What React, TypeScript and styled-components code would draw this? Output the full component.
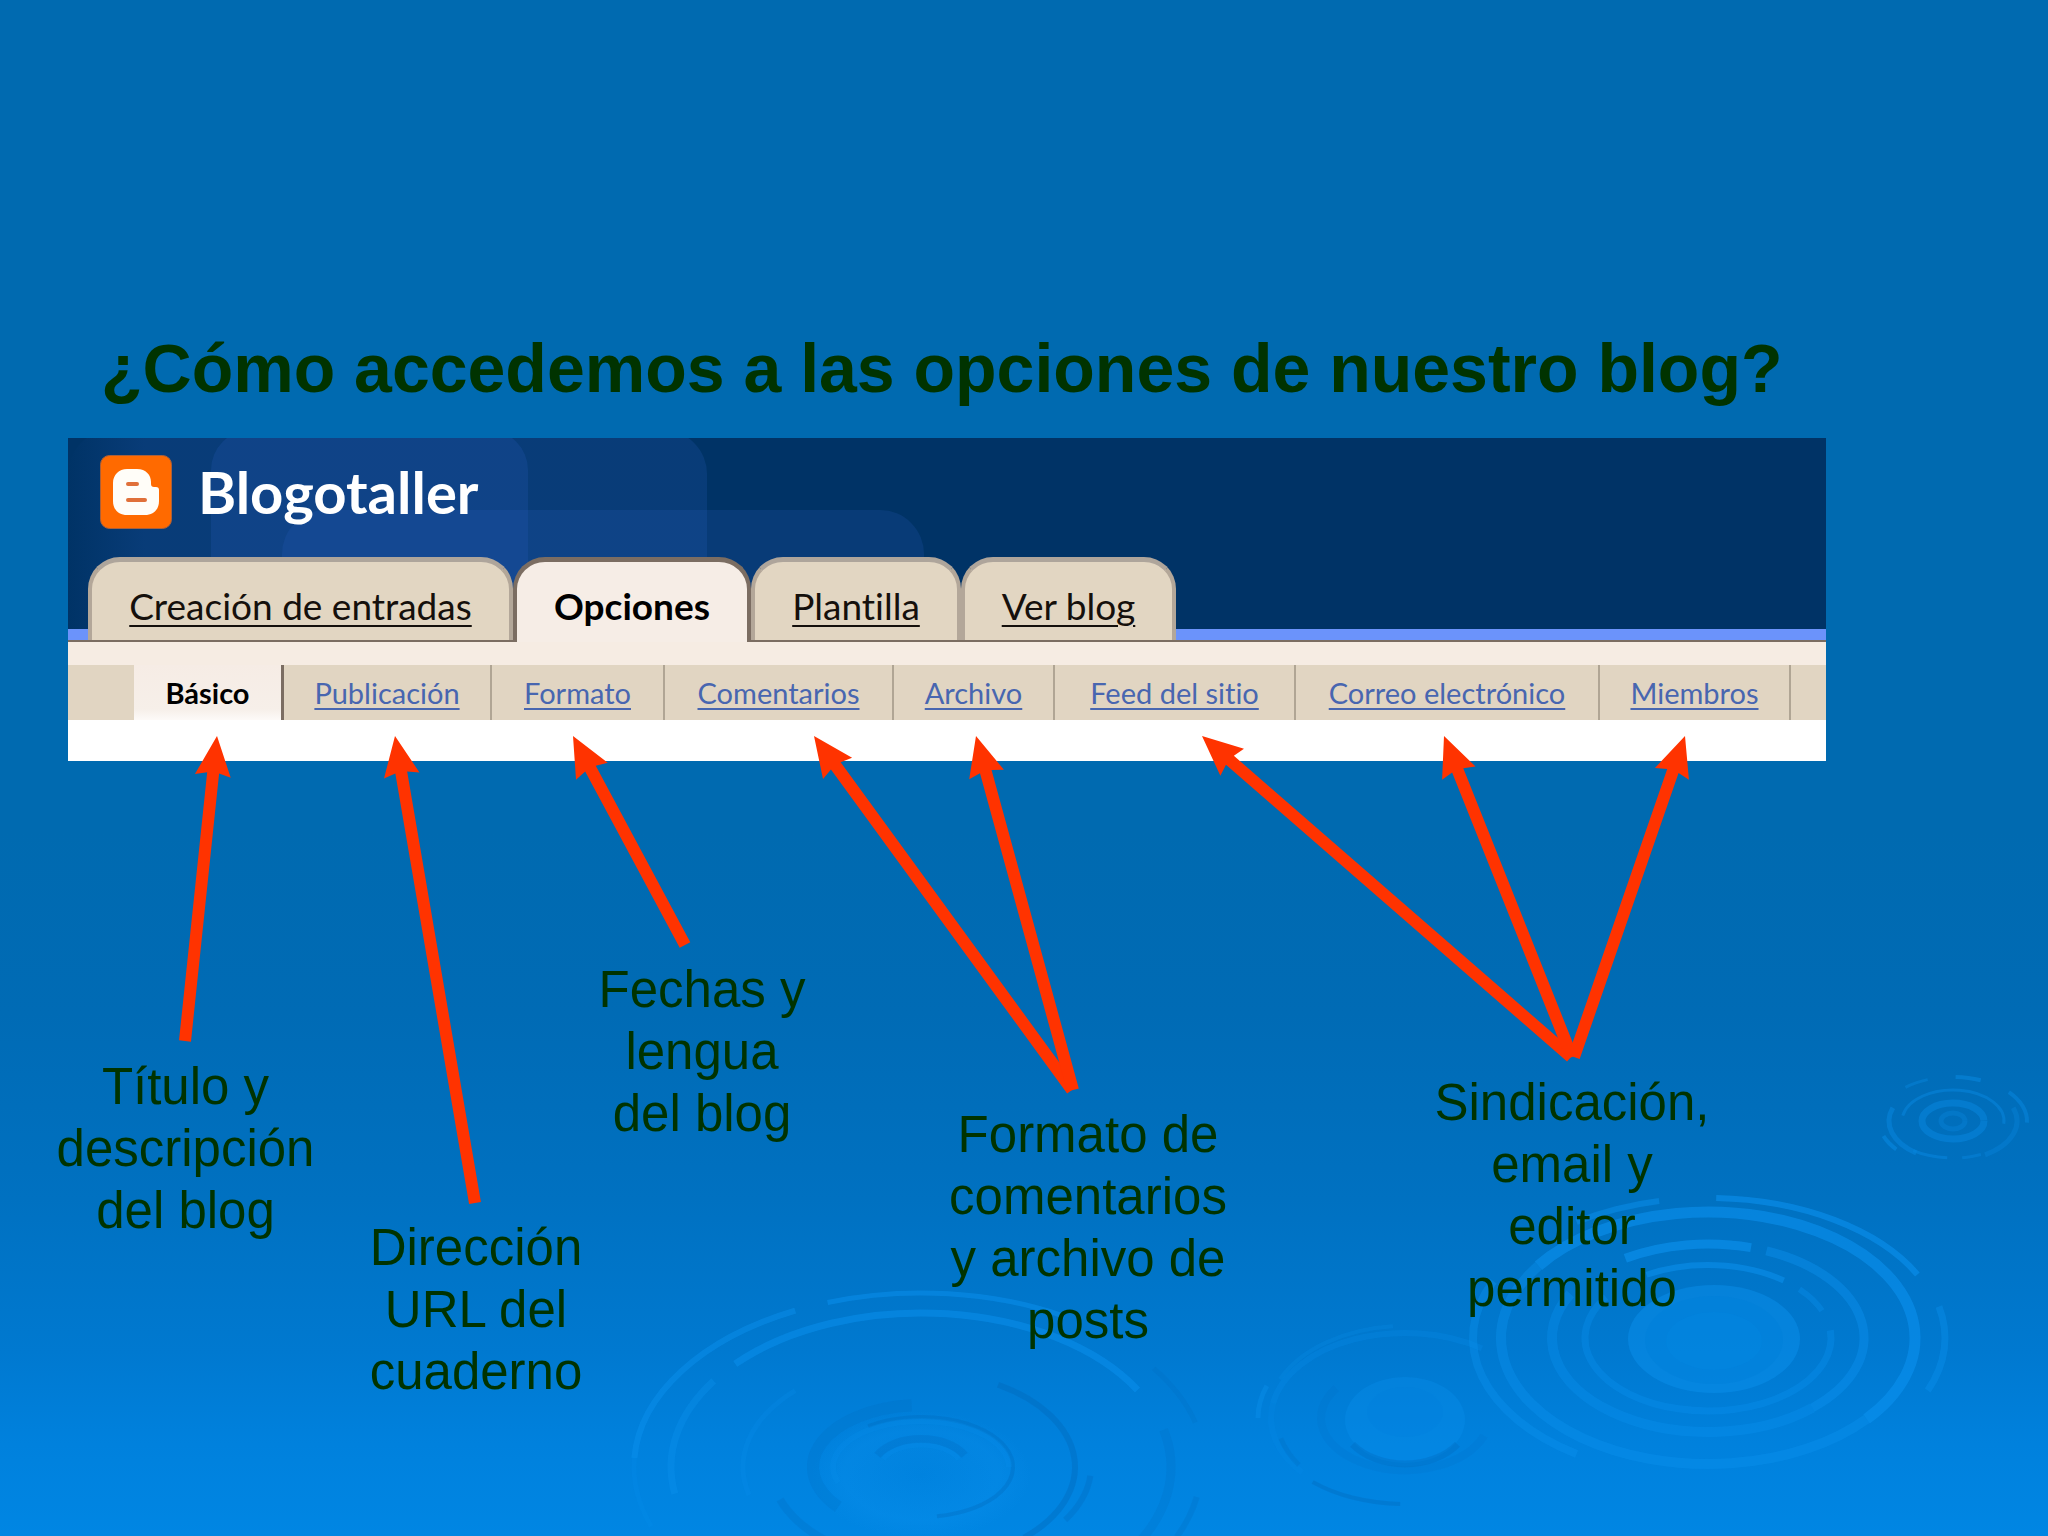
import React from "react";
import styled, { createGlobalStyle, css } from "styled-components";

const GlobalStyle = createGlobalStyle`
  *, *::before, *::after { box-sizing: border-box; }
  body { margin: 0; background: #0086e3; }
`;

const Slide = styled.main`
  position: relative;
  min-height: 100vh;
  padding-top: 320px;
  overflow: hidden;
  color: #003300;
  font-family: "Liberation Sans", Arial, sans-serif;
  background: linear-gradient(
    #006ab0 0%, #006ab0 54%, #006bb5 66%, #0071c1 78%, #0079d0 88%, #0081dd 94%, #0086e3 100%
  );
`;

const Water = styled.svg`
  position: absolute;
  inset: 0;
  width: 100%;
  height: 100%;
  fill: none;
`;

const Title = styled.h1`
  position: relative;
  margin: 0 0 22px;
  padding-left: 101px;
  font-size: 68px;
  line-height: 96px;
  font-weight: 700;
  white-space: nowrap;
`;

const Panel = styled.section`
  position: relative;
  margin: 0 222px 0 68px;
  padding-bottom: 41px;
  background: #ffffff;
  font-family: Lato, "Open Sans", sans-serif;
  font-variant-ligatures: none;
`;

const Header = styled.header`
  position: relative;
  display: flex;
  flex-direction: column;
  justify-content: space-between;
  height: 204px;
  overflow: hidden;
  background: #003366;
  border-bottom: 2px solid #7b6d62;
`;

const Backdrop = styled.svg`
  position: absolute;
  inset: 0;
  width: 100%;
  height: 100%;
`;

const Brand = styled.div`
  position: relative;
  display: flex;
  align-items: center;
  gap: 26px;
  padding: 17px 0 0 32px;
`;

const Logo = styled.svg`
  width: 72px;
  height: 74px;
`;

const BlogName = styled.h2`
  margin: 0;
  color: #ffffff;
  font-size: 58px;
  line-height: 74px;
  font-weight: 700;
`;

const Tabs = styled.nav`
  position: relative;
  display: flex;
  height: 83px;
  padding-left: 20px;
  background: linear-gradient(#6b93fb, #6b93fb) bottom / 100% 11px no-repeat;
`;

const Tab = styled.a<{ $width: number; $active?: boolean }>`
  flex: 0 0 ${(p) => p.$width}px;
  padding-top: 22px;
  border: 4px solid #b3a799;
  border-top: 5px solid #aea59b;
  border-bottom: 0;
  border-radius: 32px 32px 0 0;
  background: #e2d6c2;
  color: #15100c;
  font-size: 37px;
  line-height: 44px;
  text-align: center;
  text-decoration: underline;
  text-decoration-thickness: 2px;
  text-underline-offset: 5px;
  white-space: nowrap;
  ${(p) =>
    p.$active &&
    css`
      border-color: #7b6d62;
      background: #f6ede6;
      color: #000000;
      font-weight: 700;
      text-decoration: none;
    `}
`;

const ActiveBase = styled.div`
  position: absolute;
  z-index: 1;
  left: 449px;
  top: 202px;
  width: 230px;
  height: 2px;
  background: #f6ede6;
`;

const SubNav = styled.nav`
  display: flex;
  padding-left: 66px;
  border-top: 23px solid #f6ece3;
  background: #e1d5c2;
`;

const SubLink = styled.a<{ $width: number; $active?: boolean }>`
  flex: 0 0 ${(p) => p.$width}px;
  height: 55px;
  border-right: 2px solid #b0a594;
  color: #4866b0;
  font-size: 29px;
  line-height: 56px;
  text-align: center;
  text-decoration: underline;
  text-decoration-thickness: 2px;
  text-underline-offset: 4px;
  white-space: nowrap;
  ${(p) =>
    p.$active &&
    css`
      border-right: 3px solid #7b6d62;
      background: linear-gradient(#f6ece5, #f6efe9 80%, #fdfaf8);
      color: #000000;
      font-weight: 700;
      text-decoration: none;
    `}
`;

const Notes = styled.section`
  position: relative;
  display: grid;
  grid-template-columns: 351fr 230fr 222fr 550fr 418fr 267fr;
  align-items: start;
  padding: 198px 0 40px 10px;
`;

const Arrows = styled.svg`
  position: absolute;
  left: 0;
  top: -25px;
  width: 100%;
  height: 480px;
`;

const Note = styled.p<{ $drop: number }>`
  margin: ${(p) => p.$drop}px 0 0;
  font-size: 51px;
  line-height: 62px;
  text-align: center;
  white-space: pre-line;
`;

const tabs = [
  { label: "Creación de entradas", width: 425 },
  { label: "Opciones", width: 238, active: true },
  { label: "Plantilla", width: 210 },
  { label: "Ver blog", width: 215 },
];

const sections = [
  { label: "Básico", width: 150, active: true },
  { label: "Publicación", width: 208 },
  { label: "Formato", width: 173 },
  { label: "Comentarios", width: 229 },
  { label: "Archivo", width: 161 },
  { label: "Feed del sitio", width: 241 },
  { label: "Correo electrónico", width: 304 },
  { label: "Miembros", width: 191 },
];

const notes = [
  { text: "Título y\ndescripción\ndel blog", drop: 97 },
  { text: "Dirección\nURL del\ncuaderno", drop: 258 },
  { text: "Fechas y\nlengua\ndel blog", drop: 0 },
  { text: "Formato de\ncomentarios\ny archivo de\nposts", drop: 145 },
  { text: "Sindicación,\nemail y\neditor\npermitido", drop: 113 },
];

// Each arrow runs from its note (tail) up to the section it explains (tip).
const arrows = [
  { tail: [185, 305], tip: [217, 0] },
  { tail: [475, 467], tip: [395, 0] },
  { tail: [685, 209], tip: [573, 0] },
  { tail: [1072, 354], tip: [814, 0] },
  { tail: [1073, 354], tip: [976, 0] },
  { tail: [1571, 321], tip: [1202, 0] },
  { tail: [1572, 321], tip: [1444, 0] },
  { tail: [1574, 321], tip: [1685, 0] },
];

function Arrow({ tail, tip }: { tail: number[]; tip: number[] }) {
  const dx = tip[0] - tail[0];
  const dy = tip[1] - tail[1];
  const len = Math.hypot(dx, dy);
  const [ux, uy] = [dx / len, dy / len];
  const at = (back: number, side: number) =>
    `${tip[0] - ux * back - uy * side},${tip[1] - uy * back + ux * side}`;
  return (
    <polygon
      fill="#ff3300"
      points={[at(0, 0), at(40, 18), at(37, 6), at(len, 6), at(len, -6), at(37, -6), at(40, -18)].join(" ")}
    />
  );
}

type Ring = [rx: number, ry: number, from: number, to: number, width: number, color: string, opacity: number];

// Angles are in degrees, clockwise from the right-hand side.
function Ripple({ cx, cy, rings, strength }: { cx: number; cy: number; rings: Ring[]; strength: number }) {
  return (
    <g opacity={strength}>
      {rings.map(([rx, ry, from, to, width, color, opacity], i) => {
        const pt = (deg: number) => {
          const r = (deg * Math.PI) / 180;
          return `${cx + rx * Math.cos(r)} ${cy + ry * Math.sin(r)}`;
        };
        const mid = (from + to) / 2;
        return (
          <path
            key={i}
            d={`M${pt(from)} A${rx} ${ry} 0 0 1 ${pt(mid)} A${rx} ${ry} 0 0 1 ${pt(to)}`}
            stroke={color}
            strokeWidth={width}
            opacity={opacity}
          />
        );
      })}
    </g>
  );
}

const LIGHT = "#0c93f0";
const DARK = "#0068b8";

const bigRings: Ring[] = [
  [235, 140, 272, 333, 6, LIGHT, 0.75],
  [237, 140, 347, 382, 7, LIGHT, 0.5],
  [235, 140, 236, 258, 6, LIGHT, 0.6],
  [235, 140, 124, 204, 8, LIGHT, 0.5],
  [207, 126, 215, 400, 11, LIGHT, 0.75],
  [207, 126, 40, 215, 10, LIGHT, 0.5],
  [156, 94, 238, 286, 9, LIGHT, 0.8],
  [156, 94, 292, 408, 9, LIGHT, 0.55],
  [156, 94, 48, 208, 10, LIGHT, 0.45],
  [123, 73, 240, 308, 6, LIGHT, 0.7],
  [123, 73, 318, 338, 6, LIGHT, 0.45],
  [123, 73, -6, 214, 7, LIGHT, 0.45],
];

const lowRings: Ring[] = [
  [287, 174, 251, 300, 5, LIGHT, 0.6],
  [287, 174, 183, 244, 6, LIGHT, 0.55],
  [287, 174, 160, 183, 5, LIGHT, 0.2],
  [250, 154, 222, 330, 7, LIGHT, 0.6],
  [250, 154, 170, 214, 7, LIGHT, 0.4],
  [178, 108, 165, 225, 5, LIGHT, 0.25],
  [154, 95, 300, 408, 6, DARK, 0.45],
  [170, 100, 5, 32, 6, DARK, 0.35],
  [150, 95, 130, 160, 8, DARK, 0.25],
  [108, 62, 140, 265, 12, DARK, 0.24],
  [92, 50, 235, 440, 4, DARK, 0.4],
  [88, 46, 160, 360, 6, LIGHT, 0.25],
  [48, 28, 205, 335, 8, DARK, 0.3],
  [40, 22, 200, 340, 5, LIGHT, 0.25],
  [250, 154, -14, 28, 9, DARK, 0.22],
  [284, 172, 325, 345, 5, DARK, 0.22],
  [280, 172, 10, 24, 6, DARK, 0.25],
];

const midRings: Ring[] = [
  [134, 85, 190, 305, 6, LIGHT, 0.28],
  [134, 85, 140, 190, 6, LIGHT, 0.2],
  [147, 94, 180, 200, 5, LIGHT, 0.4],
  [138, 92, 205, 265, 4, LIGHT, 0.25],
  [128, 84, 146, 166, 5, DARK, 0.25],
  [138, 86, 92, 132, 4, DARK, 0.4],
  [84, 52, 20, 215, 8, DARK, 0.14],
  [64, 46, 35, 145, 7, DARK, 0.35],
];

const smallRings: Ring[] = [
  [12, 8, 0, 359, 5, LIGHT, 0.4],
  [31, 18, 0, 359, 7, LIGHT, 0.6],
  [51, 31, 190, 365, 3, LIGHT, 0.6],
  [64, 39, 125, 200, 5, LIGHT, 0.6],
  [64, 39, -20, 60, 5, LIGHT, 0.4],
  [74, 44, 272, 292, 4, LIGHT, 0.65],
  [74, 44, 230, 250, 3, LIGHT, 0.5],
  [74, 44, 319, 362, 4, LIGHT, 0.6],
  [74, 44, 140, 160, 4, LIGHT, 0.7],
  [66, 37, 65, 82, 3, LIGHT, 0.5],
  [66, 37, 95, 127, 3, LIGHT, 0.6],
];

export default function App() {
  return (
    <Slide>
      <GlobalStyle />
      <Water viewBox="0 0 2048 1536" preserveAspectRatio="xMaxYMax slice" aria-hidden="true">
        <defs>
          <radialGradient id="pool">
            <stop offset="0" stopColor={LIGHT} stopOpacity="0" />
            <stop offset="0.7" stopColor={LIGHT} stopOpacity="0.25" />
            <stop offset="1" stopColor={LIGHT} stopOpacity="0" />
          </radialGradient>
        </defs>
        <ellipse cx="1714" cy="1339" rx="86" ry="54" fill={LIGHT} opacity="0.42" />
        <ellipse cx="1714" cy="1340" rx="69" ry="44" fill="#007fda" opacity="0.5" />
        <ellipse cx="1714" cy="1341" rx="48" ry="29" fill={LIGHT} opacity="0.12" />
        <ellipse cx="1405" cy="1420" rx="60" ry="43" fill={LIGHT} opacity="0.28" />
        <ellipse cx="1405" cy="1412" rx="38" ry="25" fill="#007fda" opacity="0.2" />
        <ellipse cx="921" cy="1475" rx="110" ry="64" fill="url(#pool)" />
        <Ripple cx={1708} cy={1338} rings={bigRings} strength={0.75} />
        <Ripple cx={921} cy={1467} rings={lowRings} strength={0.8} />
        <Ripple cx={1405} cy={1418} rings={midRings} strength={0.85} />
        <Ripple cx={1953} cy={1121} rings={smallRings} strength={0.6} />
      </Water>

      <Title>¿Cómo accedemos a las opciones de nuestro blog?</Title>

      <Panel>
        <Header>
          <Backdrop aria-hidden="true">
            <defs>
              <linearGradient id="fade">
                <stop offset="0" stopColor="#2a60c0" stopOpacity="0" />
                <stop offset="0.12" stopColor="#2a60c0" stopOpacity="0.2" />
                <stop offset="1" stopColor="#2a60c0" stopOpacity="0.2" />
              </linearGradient>
            </defs>
            <rect x="0" y="-8" width="639" height="300" rx="44" fill="url(#fade)" />
            <rect x="143" y="-8" width="317" height="300" rx="40" fill="#2a60c0" opacity="0.22" />
            <rect x="214" y="72" width="642" height="300" rx="44" fill="#2a60c0" opacity="0.2" />
          </Backdrop>
          <Brand>
            <Logo viewBox="0 0 72 74" aria-hidden="true">
              <rect x="0.5" y="0.5" width="71" height="73" rx="9" fill="#ff6a00" stroke="#a8603c" />
              <path
                fill="#fffdf8"
                d="M27 14h10c9 0 14 6 14 13v2c0 2 1 3 3 3h2c2 0 3 1 3 3v11c0 9-6 14-14 14H27c-8 0-14-5-14-14V28c0-8 6-14 14-14z"
              />
              <path stroke="#e0703a" strokeWidth="4" strokeLinecap="round" d="M28 29h9M28 45h17" />
            </Logo>
            <BlogName>Blogotaller</BlogName>
          </Brand>
          <Tabs aria-label="Blog">
            {tabs.map((t) => (
              <Tab key={t.label} href="#" $width={t.width} $active={t.active}>
                {t.label}
              </Tab>
            ))}
          </Tabs>
        </Header>
        <ActiveBase />
        <SubNav aria-label="Opciones">
          {sections.map((s) => (
            <SubLink key={s.label} href="#" $width={s.width} $active={s.active}>
              {s.label}
            </SubLink>
          ))}
        </SubNav>
      </Panel>

      <Notes>
        <Arrows viewBox="0 0 2048 480" preserveAspectRatio="none" aria-hidden="true">
          {arrows.map((a, i) => (
            <Arrow key={i} {...a} />
          ))}
        </Arrows>
        {notes.map((n) => (
          <Note key={n.text} $drop={n.drop}>
            {n.text}
          </Note>
        ))}
      </Notes>
    </Slide>
  );
}
